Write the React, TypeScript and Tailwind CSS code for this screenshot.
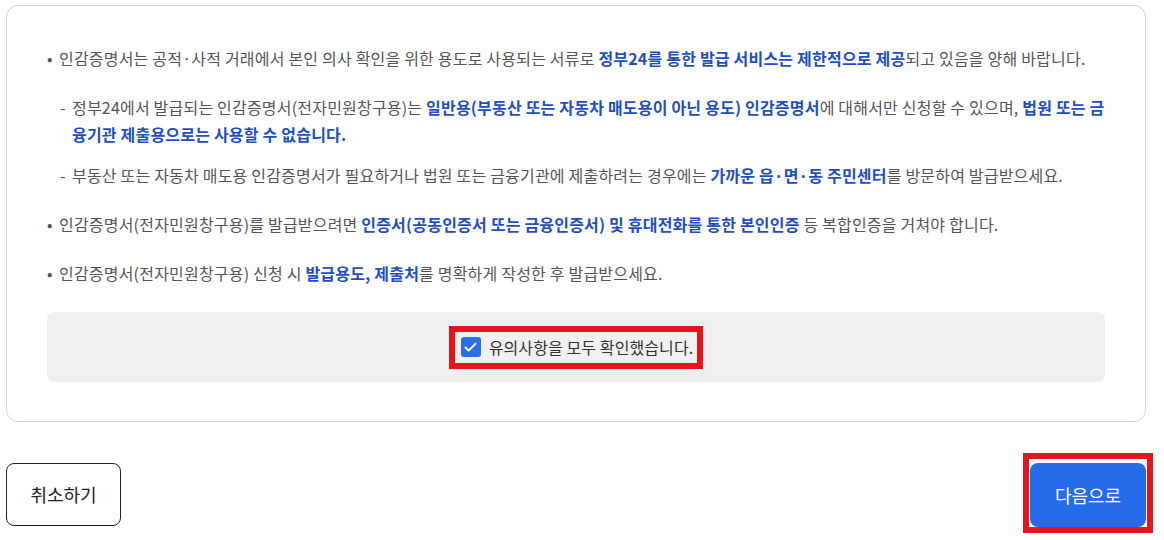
import { Check } from 'lucide-react';

const B = ({ children }: { children: React.ReactNode }) => (
  <strong className="font-bold text-[#1f4fbf]">{children}</strong>
);

function Bullet({ children }: { children: React.ReactNode }) {
  return (
    <li className="flex">
      <span className="w-[12px] shrink-0">•</span>
      <div>{children}</div>
    </li>
  );
}

function SubItem({ children }: { children: React.ReactNode }) {
  return (
    <li className="flex">
      <span className="w-[12px] shrink-0">-</span>
      <div>{children}</div>
    </li>
  );
}

export default function App() {
  return (
    <div
      className="w-[1164px] h-[540px] bg-white pl-[6px] pt-[5px] overflow-hidden"
      style={{ fontFamily: '"Noto Sans CJK KR", "Noto Sans", sans-serif' }}
    >
      <div className="w-[1140px]">
        {/* Notice card */}
        <div className="rounded-[12px] border border-[#d2d2d2] px-[40px] pt-[39px] pb-[39px]">
          <ul className="space-y-[22px] text-[16px] tracking-[0.2px] leading-[27px] text-[#555555] whitespace-nowrap">
            <Bullet>
              인감증명서는 공적·사적 거래에서 본인 의사 확인을 위한 용도로 사용되는 서류로{' '}
              <B>정부24를 통한 발급 서비스는 제한적으로 제공</B>되고 있음을 양해 바랍니다.
            </Bullet>
            <li className="pl-[13px]">
              <ul className="space-y-[14px]">
                <SubItem>
                  정부24에서 발급되는 인감증명서(전자민원창구용)는{' '}
                  <B>일반용(부동산 또는 자동차 매도용이 아닌 용도) 인감증명서</B>에 대해서만 신청할 수 있으며,{' '}
                  <B>법원 또는 금</B>
                  <br />
                  <B>융기관 제출용으로는 사용할 수 없습니다.</B>
                </SubItem>
                <SubItem>
                  부동산 또는 자동차 매도용 인감증명서가 필요하거나 법원 또는 금융기관에 제출하려는 경우에는{' '}
                  <B>가까운 읍·면·동 주민센터</B>를 방문하여 발급받으세요.
                </SubItem>
              </ul>
            </li>
            <Bullet>
              인감증명서(전자민원창구용)를 발급받으려면{' '}
              <B>인증서(공동인증서 또는 금융인증서) 및 휴대전화를 통한 본인인증</B> 등 복합인증을 거쳐야 합니다.
            </Bullet>
            <Bullet>
              인감증명서(전자민원창구용) 신청 시 <B>발급용도, 제출처</B>를 명확하게 작성한 후 발급받으세요.
            </Bullet>
          </ul>

          {/* Confirm box */}
          <div className="mt-[25px] h-[70px] rounded-[8px] bg-[#f0f0f0] flex items-center justify-center">
            <label className="flex items-center gap-[8px] border-[6px] border-[#e8141c] pl-[6px] pr-[4px] h-[43px] cursor-pointer">
              <span className="w-[20px] h-[20px] rounded-[3px] bg-[#2a6fe6] flex items-center justify-center">
                <Check className="w-[15px] h-[15px] text-white" strokeWidth={3} />
              </span>
              <span className="text-[16px] tracking-[0.1px] text-[#333333]">유의사항을 모두 확인했습니다.</span>
            </label>
          </div>
        </div>

        {/* Actions */}
        <div className="mt-[31px] flex items-start justify-between">
          <button className="mt-[10px] w-[115px] h-[63px] rounded-[8px] border border-[#222222] bg-white text-[18px] text-[#222222]">
            취소하기
          </button>
          <div className="border-[6px] border-[#e8141c] px-[1px] pt-[4px] pb-0 -mr-[7px]">
            <button className="block w-[116px] h-[64px] rounded-[8px] bg-[#256cea] text-[18px] text-white">
              다음으로
            </button>
          </div>
        </div>
      </div>
    </div>
  );
}
